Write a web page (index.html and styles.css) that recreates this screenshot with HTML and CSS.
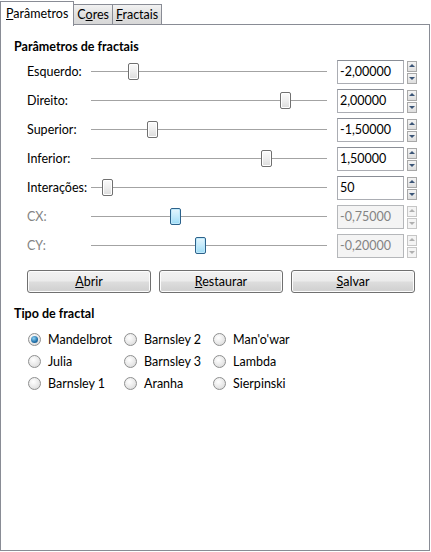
FILE: index.html
```html
<!DOCTYPE html>
<html>
<head>
<meta charset="utf-8">
<link rel="stylesheet" href="styles.css">
</head>
<body>
<div class="window">
  <div class="tabs">
    <div class="tab active"><u>P</u>arâmetros</div>
    <div class="tab">C<u>o</u>res</div>
    <div class="tab"><u>F</u>ractais</div>
    <div class="tab-fill"></div>
  </div>
  <div class="pane">
    <div class="group-title">Parâmetros de fractais</div>
    <div class="params">
      <div class="row"><span class="label">Esquerdo:</span><div class="slider"><span class="handle" style="left:37px"></span></div><div class="spin"><div class="input">-2,00000</div><div class="arrows"><span class="arr up"></span><span class="arr down"></span></div></div></div>
      <div class="row"><span class="label">Direito:</span><div class="slider"><span class="handle" style="left:189px"></span></div><div class="spin"><div class="input">2,00000</div><div class="arrows"><span class="arr up"></span><span class="arr down"></span></div></div></div>
      <div class="row"><span class="label">Superior:</span><div class="slider"><span class="handle" style="left:56px"></span></div><div class="spin"><div class="input">-1,50000</div><div class="arrows"><span class="arr up"></span><span class="arr down"></span></div></div></div>
      <div class="row"><span class="label">Inferior:</span><div class="slider"><span class="handle" style="left:170px"></span></div><div class="spin"><div class="input">1,50000</div><div class="arrows"><span class="arr up"></span><span class="arr down"></span></div></div></div>
      <div class="row"><span class="label">Interações:</span><div class="slider"><span class="handle" style="left:11px"></span></div><div class="spin"><div class="input">50</div><div class="arrows"><span class="arr up"></span><span class="arr down"></span></div></div></div>
      <div class="row disabled"><span class="label">CX:</span><div class="slider"><span class="handle blue" style="left:79px"></span></div><div class="spin"><div class="input">-0,75000</div><div class="arrows"><span class="arr up"></span><span class="arr down"></span></div></div></div>
      <div class="row disabled"><span class="label">CY:</span><div class="slider"><span class="handle blue" style="left:104px"></span></div><div class="spin"><div class="input">-0,20000</div><div class="arrows"><span class="arr up"></span><span class="arr down"></span></div></div></div>
    </div>
    <div class="buttons">
      <div class="btn"><u>A</u>brir</div>
      <div class="btn"><u>R</u>estaurar</div>
      <div class="btn"><u>S</u>alvar</div>
    </div>
    <div class="group-title second">Tipo de fractal</div>
    <div class="radios">
      <div class="radio checked"><span class="dot"></span>Mandelbrot</div>
      <div class="radio"><span class="dot"></span>Barnsley 2</div>
      <div class="radio"><span class="dot"></span>Man'o'war</div>
      <div class="radio"><span class="dot"></span>Julia</div>
      <div class="radio"><span class="dot"></span>Barnsley 3</div>
      <div class="radio"><span class="dot"></span>Lambda</div>
      <div class="radio"><span class="dot"></span>Barnsley 1</div>
      <div class="radio"><span class="dot"></span>Aranha</div>
      <div class="radio"><span class="dot"></span>Sierpinski</div>
    </div>
  </div>
</div>
</body>
</html>
```
FILE: styles.css
```css
* { box-sizing: border-box; }
html, body { margin: 0; padding: 0; background: #ffffff; }
body {
  font-family: Lato, "Noto Sans", sans-serif;
  font-size: 12.5px;
  color: #000;
}
.window {
  width: 431px;
  height: 552px;
  display: flex;
  flex-direction: column;
}
.tabs {
  display: flex;
  align-items: flex-end;
  height: 25px;
  flex: none;
}
.tab {
  height: 21px;
  padding: 0 3px;
  border: 1px solid #898c95;
  border-bottom: none;
  border-left: none;
  background: linear-gradient(#f2f2f2, #e1e1e1 50%, #d7d7d7);
  line-height: 20px;
  position: relative;
}
.tab.active {
  height: 25px;
  background: #fff;
  border-left: 1px solid #898c95;
  padding: 0 5px 0 5px;
  line-height: 24px;
  margin-bottom: -1px;
  z-index: 1;
}
.tab-fill {
  flex: 1;
  border-bottom: 1px solid #898c95;
  height: 1px;
  margin-right: 1px;
}
.tab:not(.active) { border-bottom: 1px solid #898c95; }
.pane {
  flex: 1;
  border: 1px solid #898c95;
  border-top: none;
  margin-right: 1px;
  margin-bottom: 1px;
  padding: 13px 0 0 13px;
}
.group-title {
  font-weight: bold;
  height: 18px;
  line-height: 18px;
}
.group-title.second { margin-top: 12px; }
.params {
  display: flex;
  flex-direction: column;
  gap: 6px;
  margin-top: 4px;
  padding-left: 13px;
}
.row {
  display: flex;
  align-items: center;
  height: 23px;
}
.label {
  width: 64px;
  flex: none;
}
.slider {
  width: 236px;
  height: 23px;
  position: relative;
  flex: none;
}
.slider::before {
  content: "";
  position: absolute;
  left: 0; right: 0; top: 11px;
  height: 1px;
  background: #a3a3a3;
}
.handle {
  position: absolute;
  top: 3px;
  width: 11px;
  height: 17px;
  border: 1px solid #707070;
  border-radius: 2px;
  background: linear-gradient(#fbfbfb, #eeeeee 50%, #dcdcdc);
  box-shadow: inset 0 0 0 1px #fff;
}
.handle.blue {
  border-color: #2c628b;
  background: linear-gradient(#e5f6fd, #c4eafb 50%, #9ddcf6);
  box-shadow: inset 0 0 0 1px #bfe9fb;
}
.spin {
  display: flex;
  margin-left: 10px;
  gap: 3px;
}
.input {
  width: 67px;
  height: 24px;
  border: 1px solid #abadb3;
  border-top-color: #8a8e96;
  padding-left: 2px;
  line-height: 22px;
  background: #fff;
}
.arrows {
  display: flex;
  flex-direction: column;
  gap: 1px;
  padding-top: 1px;
}
.arr {
  width: 10px;
  height: 11px;
  border: 1px solid #a8a8a8;
  background: linear-gradient(#f4f4f4, #dedede);
  position: relative;
}
.arr::after {
  content: "";
  position: absolute;
  left: 1px;
  width: 0; height: 0;
  border-left: 3px solid transparent;
  border-right: 3px solid transparent;
}
.arr.up::after { top: 2px; border-bottom: 3px solid #3b5577; }
.arr.down::after { top: 3px; border-top: 3px solid #3b5577; }
.disabled .label { color: #838383; }
.disabled .input {
  background: #f4f4f4;
  color: #838383;
  border-color: #b5b7ba;
}
.disabled .arr { border-color: #c6c6c6; background: #f4f4f4; }
.disabled .arr.up::after { border-bottom-color: #b0b0b0; }
.disabled .arr.down::after { border-top-color: #b0b0b0; }
.buttons {
  display: flex;
  gap: 8px;
  margin-top: 13px;
  padding-left: 13px;
}
.btn {
  width: 124px;
  height: 23px;
  border: 1px solid #707070;
  border-radius: 3px;
  background: linear-gradient(#f2f2f2, #ebebeb 48%, #dddddd 52%, #cfcfcf);
  box-shadow: inset 0 0 0 1px #fcfcfc;
  text-align: center;
  line-height: 21px;
}
.radios {
  display: grid;
  grid-template-columns: 96px 89px 100px;
  grid-auto-rows: 22px;
  margin-top: 5px;
  padding-left: 14px;
}
.radio {
  display: flex;
  align-items: center;
}
.dot {
  width: 13px;
  height: 13px;
  border-radius: 50%;
  border: 1px solid #8e8f8f;
  background: radial-gradient(circle at 40% 35%, #ffffff, #e6e6e6 60%, #d2d2d2);
  margin-right: 7px;
  position: relative;
  flex: none;
}
.radio.checked .dot::after {
  content: "";
  position: absolute;
  left: 2px; top: 2px;
  width: 7px; height: 7px;
  border-radius: 50%;
  background: radial-gradient(circle at 40% 35%, #8fd3f5, #1f6fa8 60%, #174a78);
}
```
